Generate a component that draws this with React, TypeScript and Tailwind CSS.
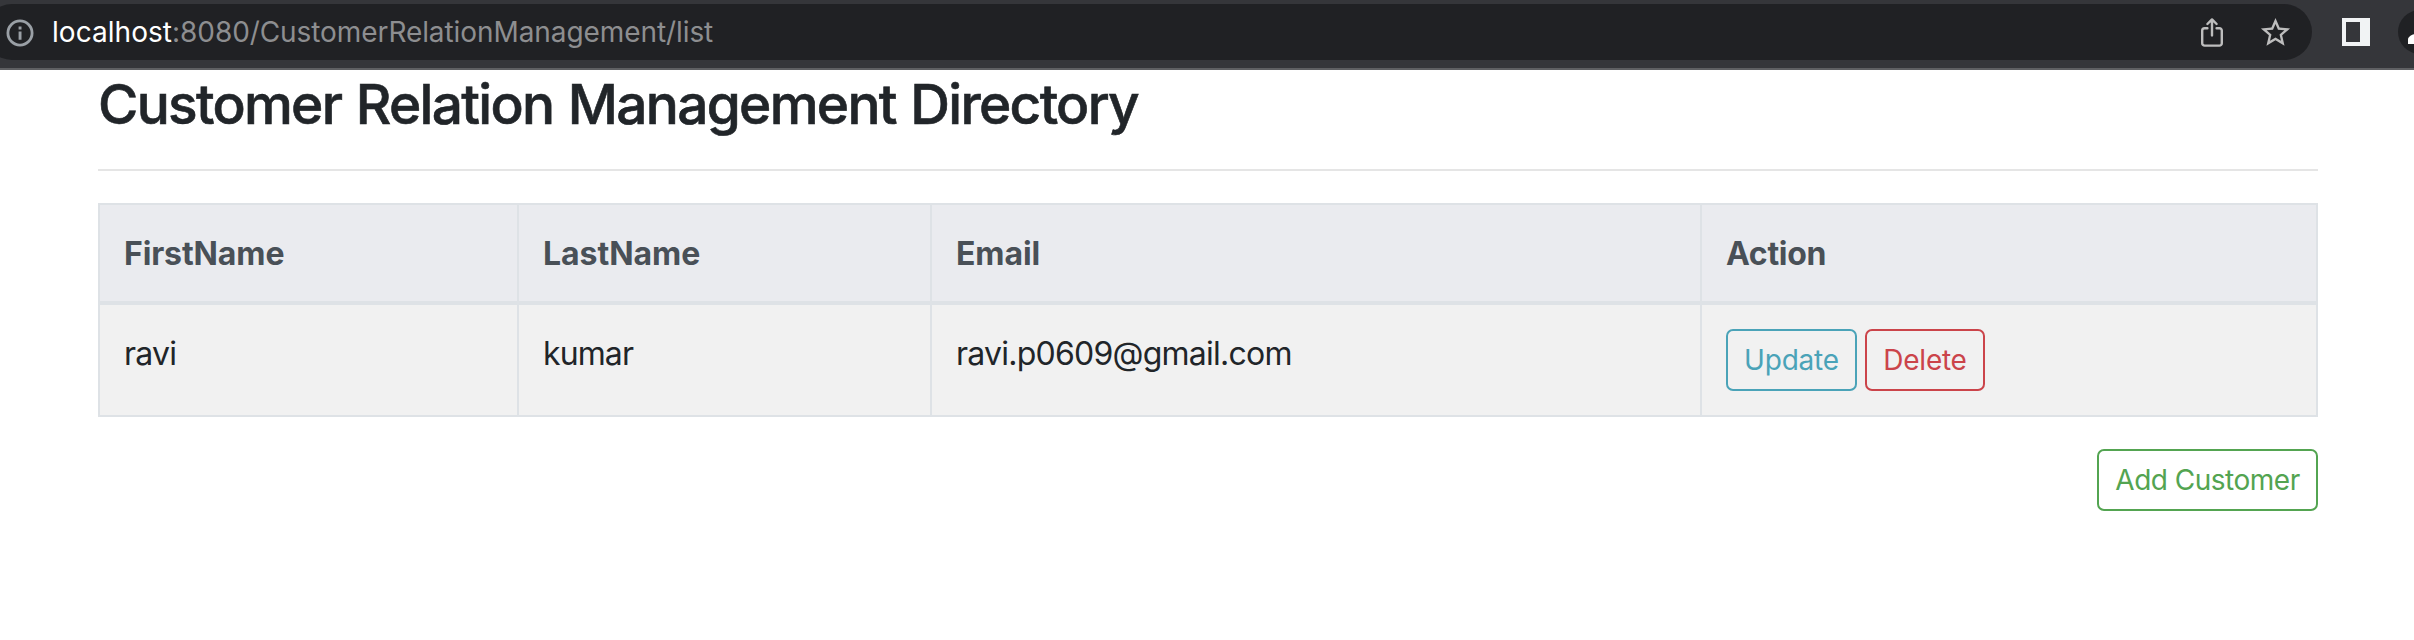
import type { ReactNode } from "react";

function InfoIcon() {
  return (
    <svg className="block h-[28px] w-[28px] shrink-0" viewBox="0 0 28 28" fill="none">
      <circle cx="14" cy="14" r="12.1" stroke="#9aa0a6" strokeWidth="2.8" />
      <path d="M12.6 7.6h2.9v2.9h-2.9zM12.6 12.6h2.9v8.2h-2.9z" fill="#9aa0a6" />
    </svg>
  );
}

function ShareIcon() {
  return (
    <svg
      className="block h-[30px] w-[24px] shrink-0"
      viewBox="0 0 24 30"
      fill="none"
      stroke="#bdbdbd"
      strokeWidth="2.4"
      strokeLinecap="round"
      strokeLinejoin="round"
    >
      <path d="M7.4 11.2H4.6a2.4 2.4 0 0 0-2.4 2.4v12.6a2.4 2.4 0 0 0 2.4 2.4h14.8a2.4 2.4 0 0 0 2.4-2.4V13.6a2.4 2.4 0 0 0-2.4-2.4h-2.8" />
      <path d="M12 18.4V2.8M7.4 7 12 2.4 16.6 7" />
    </svg>
  );
}

function StarIcon() {
  return (
    <svg className="block h-[35px] w-[35px] shrink-0" viewBox="0 0 24 24" fill="#bdbdbd">
      <path d="M22 9.24l-7.19-.62L12 2 9.19 8.63 2 9.24l5.46 4.73L5.82 21 12 17.27 18.18 21l-1.63-7.03L22 9.24zM12 15.4l-3.76 2.27 1-4.28-3.32-2.88 4.38-.38L12 6.1l1.71 4.04 4.38.38-3.32 2.88 1 4.28L12 15.4z" />
    </svg>
  );
}

function SidePanelIcon() {
  return (
    <svg className="block h-[28px] w-[28px] shrink-0" viewBox="0 0 28 28">
      <path fill="#f1f3f4" fillRule="evenodd" d="M0 0h28v28H0zM4 4v20h14V4z" />
    </svg>
  );
}

function Avatar() {
  return (
    <svg className="block h-[44px] w-[44px] shrink-0" viewBox="0 0 44 44">
      <circle cx="22" cy="22" r="22" fill="#202124" />
      <path fill="#ffffff" d="M10 34v-4.6c0-2.4 3-4.6 6-5.2h12c3 .6 6 2.8 6 5.2V34z" />
    </svg>
  );
}

function BrowserBar() {
  return (
    <header className="flex h-[70px] items-start border-b-2 border-[#5f6063] bg-[#35363a]">
      <div className="-ml-4 mt-1 flex h-14 w-[2328px] shrink-0 items-center rounded-full bg-[#202124] pr-[19px]">
        <div className="ml-[22px] mt-px">
          <InfoIcon />
        </div>
        <div className="ml-[18px] grow whitespace-nowrap text-[28px] leading-[56px] tracking-[-0.08px] text-[#8d8e90]">
          <span className="tracking-[0.05px] text-white">localhost</span>
          :8080/CustomerRelationManagement/list
        </div>
        <ShareIcon />
        <div className="ml-[34px]">
          <StarIcon />
        </div>
      </div>
      <div className="ml-[30px] mt-[18px]">
        <SidePanelIcon />
      </div>
      <div className="ml-[28px] mt-[10px]">
        <Avatar />
      </div>
    </header>
  );
}

function Button({ className, children }: { className: string; children: ReactNode }) {
  return (
    <button
      type="button"
      className={`flex h-[62px] items-center justify-center whitespace-nowrap rounded-[7px] border-2 text-[28px] leading-none ${className}`}
    >
      {children}
    </button>
  );
}

const th = "border-r-2 border-[#dee2e6] pl-6 pt-px text-left text-[32px] leading-[95px] font-bold";
const td = "border-r-2 border-[#dee2e6] pl-6 pt-6 text-[32px] leading-[50px]";
const columns = "grid grid-cols-[419px_413px_770px_616px]";

export default function App() {
  return (
    <div className="h-[640px] w-[2414px] overflow-hidden bg-white font-['Inter','Liberation_Sans',sans-serif] text-[#212529]">
      <BrowserBar />
      <main className="ml-[98px] w-[2220px]">
        <h3 className="whitespace-nowrap text-[55px] leading-[68px] font-medium tracking-[-1.7px] [word-spacing:1.5px] [-webkit-text-stroke:0.6px_#212529]">
          Customer Relation Management Directory
        </h3>
        <hr className="mt-[31px] border-t-2 border-[#e5e5e5]" />
        <div role="table" className="mt-8 border-2 border-r-0 border-[#dee2e6]">
          <div
            role="row"
            className={`${columns} border-b-4 border-[#dee2e6] bg-[#eaebef] text-[#495057]`}
          >
            <div role="columnheader" className={`${th} tracking-[-0.12px]`}>FirstName</div>
            <div role="columnheader" className={`${th} tracking-[-0.04px]`}>LastName</div>
            <div role="columnheader" className={`${th} tracking-[-0.1px]`}>Email</div>
            <div role="columnheader" className={`${th} tracking-[-0.3px]`}>Action</div>
          </div>
          <div role="row" className={`${columns} h-[110px] bg-[#f1f1f1]`}>
            <div role="cell" className={`${td} tracking-[-0.8px]`}>ravi</div>
            <div role="cell" className={`${td} tracking-[-0.9px]`}>kumar</div>
            <div role="cell" className={`${td} tracking-[-0.76px]`}>ravi.p0609@gmail.com</div>
            <div role="cell" className={`${td} flex gap-2`}>
              <Button className="w-[131px] border-[#4aa3b8] tracking-[-0.2px] text-[#4aa3b8]">Update</Button>
              <Button className="w-[120px] border-[#cb444a] tracking-[-0.25px] text-[#cb444a]">Delete</Button>
            </div>
          </div>
        </div>
        <div className="mt-8 flex justify-end">
          <Button className="w-[221px] border-[#53a451] tracking-[-0.5px] text-[#53a451]">Add Customer</Button>
        </div>
      </main>
    </div>
  );
}
